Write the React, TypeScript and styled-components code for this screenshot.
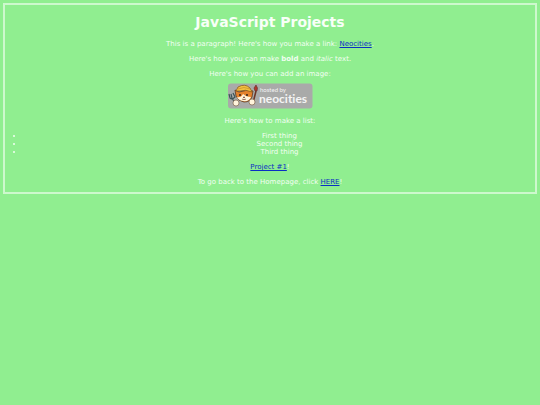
import React from "react";
import styled, { createGlobalStyle } from "styled-components";

const GlobalStyle = createGlobalStyle`
  body {
    margin: 3px;
    background: #90ee90;
    color: #f2fef2;
    font: 7px/8px "DejaVu Sans", Verdana, sans-serif;
  }
`;

const Page = styled.main`
  border: 2px solid #cdf8cd;
  padding: 9px 0 6px;
  text-align: center;
`;

const Title = styled.h1`
  margin: 0 0 9px;
  color: #f8fff8;
  font-size: 14px;
  line-height: 17px;
`;

const Paragraph = styled.p`
  margin: 0 0 7px;

  &:last-child {
    margin-bottom: 0;
  }
`;

const Link = styled.a`
  color: #0a2fc4;
`;

const List = styled.ul`
  margin: 0 0 7px;
  padding: 0 0 0 19px;
`;

const BadgeLink = styled.a`
  display: block;
  width: 85px;
  margin: -2px auto 8px;
`;

const Badge = styled.svg`
  display: block;
  width: 100%;
`;

const BadgeText = styled.text`
  fill: #f4f4f4;
  font-family: Lato, "Open Sans", sans-serif;
  font-variant-ligatures: none;
`;

function NeocitiesBadge() {
  return (
    <Badge viewBox="0 0 85 26" role="img" aria-label="Hosted by Neocities">
      <rect x="0" y="0.5" width="84.5" height="25" rx="3" fill="#a9aaa9" />
      <path d="M4 15 8 22M1 11l1 4q2 2 5-1l-2-4M3 11l1 4" fill="none" stroke="#3d5558" strokeWidth="1.2" />
      <path d="M28 8 25 20" stroke="#6c3526" strokeWidth="1.6" />
      <path d="m27 8-1-3 2-3 1.5 3-.5 3z" fill="#b3352c" stroke="#55332b" strokeWidth=".6" />
      <path d="m8 13-1-6 4 2 9-2 5 1-1 6q-2 5-8 5-6-1-8-6z" fill="#e3812c" stroke="#553725" strokeWidth=".8" />
      <path d="M15 11q3 3 8 3-2 5-8 4-5-1-6-4 4 1 6-3z" fill="#fff4dc" />
      <path d="M8 8 10 4q7-4 12 1l2 4q-7-3-12-1z" fill="#f2c140" stroke="#8a5b22" strokeWidth=".8" />
      <path d="M10 6q6-3 12 0" fill="none" stroke="#c88c2a" strokeWidth=".7" />
      <circle cx="12" cy="12" r="1" fill="#33231d" />
      <circle cx="19" cy="12" r="1" fill="#33231d" />
      <path d="m15 14 2 0-1 1zM14 16q2 1 4 0" fill="#754030" stroke="#754030" strokeWidth=".5" />
      <circle cx="8" cy="20" r="3" fill="#fff4dc" stroke="#6e5037" strokeWidth=".6" />
      <circle cx="24" cy="19" r="3" fill="#fff4dc" stroke="#6e5037" strokeWidth=".6" />
      <BadgeText x="32" y="9" fontSize="6">hosted by</BadgeText>
      <BadgeText x="31" y="20" fontSize="12" fontWeight="bold">neocities</BadgeText>
    </Badge>
  );
}

export default function App() {
  return (
    <>
      <GlobalStyle />
      <Page>
        <Title>JavaScript Projects</Title>
        <Paragraph>
          This is a paragraph! Here's how you make a link: <Link href="#neocities">Neocities</Link>.
        </Paragraph>
        <Paragraph>
          Here's how you can make <strong>bold</strong> and <em>italic</em> text.
        </Paragraph>
        <Paragraph>Here's how you can add an image:</Paragraph>
        <BadgeLink href="#neocities-home">
          <NeocitiesBadge />
        </BadgeLink>
        <Paragraph>Here's how to make a list:</Paragraph>
        <List>
          <li>First thing</li>
          <li>Second thing</li>
          <li>Third thing</li>
        </List>
        <Paragraph>
          <Link href="#project-1">Project #1</Link>!
        </Paragraph>
        <Paragraph>
          To go back to the Homepage, click <Link href="#home">HERE</Link>!
        </Paragraph>
      </Page>
    </>
  );
}
